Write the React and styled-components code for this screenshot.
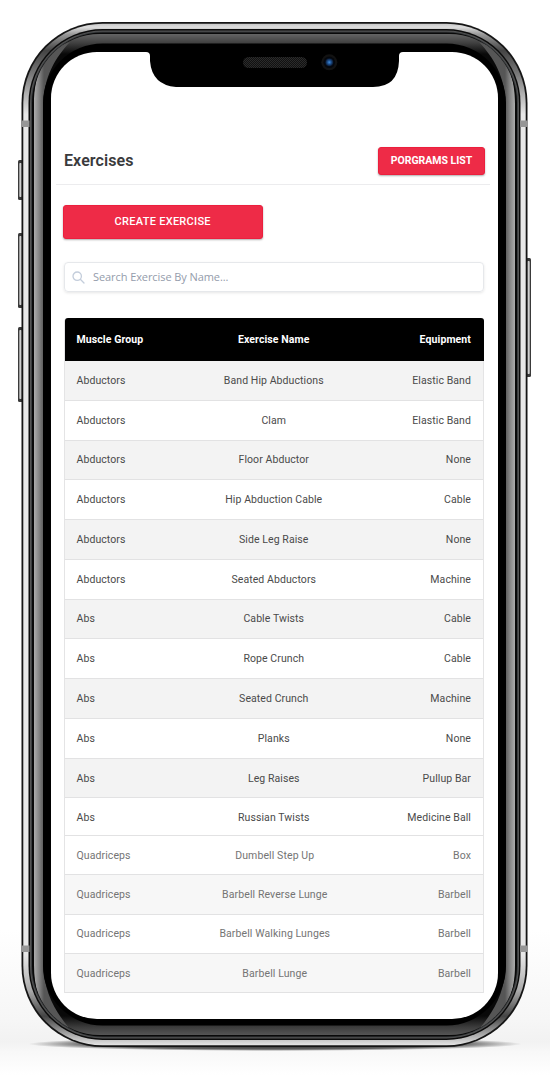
import React from "react";
import styled, { createGlobalStyle } from "styled-components";

const GlobalStyle = createGlobalStyle`
  *, *::before, *::after { box-sizing: border-box; }
  body { margin: 0; background: #fff; font-family: Roboto, "Liberation Sans", sans-serif; }
`;

const Stage = styled.main`
  position: relative;
  width: 550px;
  height: 1075px;
  padding: 52px 52px 56px 51px;
  overflow: hidden;
  background: linear-gradient(#fff 0 930px, #f6f6f6 1020px, #f2f2f2 1042px, #f8f8f8 1052px, #fff 1075px);
`;

const DeviceArt = styled.svg`
  position: absolute;
  inset: 0;
`;

const Screen = styled.div`
  position: relative;
  width: 447px;
  height: 967px;
  padding: 84px 8px 0 5px;
  border-radius: 46px;
  background: #fff;
`;

const TopBar = styled.header`
  display: flex;
  align-items: center;
  justify-content: space-between;
  height: 49px;
  padding: 1px 5px 0 8px;
  border-bottom: 1px solid #ececee;
`;

const Title = styled.h1`
  margin: 0;
  font-size: 16px;
  line-height: 20px;
  font-weight: 600;
  letter-spacing: 0.1px;
  color: #3a3a3c;
`;

const Button = styled.button`
  display: block;
  width: ${(p) => p.$w}px;
  height: ${(p) => p.$h}px;
  padding: 0;
  border: 1px solid #ec1f3d;
  border-radius: 3px;
  background: #ee2b47;
  box-shadow: 0 1px 2px rgba(0, 0, 0, 0.32);
  color: #fff;
  font: ${(p) => p.$weight} ${(p) => p.$size}px/14px Roboto, sans-serif;
  letter-spacing: ${(p) => p.$tracking}px;
`;

const Body = styled.section`
  padding: 20px 6px 0 6.5px;
`;

const SearchField = styled.label`
  display: flex;
  align-items: center;
  gap: 8px;
  height: 30px;
  margin: 23px 0 0 1px;
  padding-left: 7.5px;
  border: 1px solid #e6e8eb;
  border-radius: 4px;
  box-shadow: 0 1px 3px rgba(0, 0, 0, 0.1);
`;

const SearchInput = styled.input`
  flex: 1;
  min-width: 0;
  padding: 0;
  border: 0;
  outline: 0;
  background: transparent;
  font: 11px/16px "Open Sans", sans-serif;
  letter-spacing: -0.08px;
  &::placeholder { color: #949cab; opacity: 1; }
`;

const Table = styled.div`
  margin: 26px 0 0 1.5px;
  border: 1px solid #e4e4e5;
  border-top: 0;
  border-bottom: 0;
  border-radius: 4px 4px 0 0;
`;

const Row = styled.div`
  display: grid;
  grid-template-columns: 110px 1fr 110px;
  align-items: center;
  height: ${(p) => p.$h}px;
  padding: ${(p) => p.$drop || 0}px 12px 0 11.5px;
  border-bottom: 1px solid #e2e2e3;
  background: ${(p) => (p.$shaded ? (p.$faded ? "#f7f7f7" : "#f3f3f3") : "#fff")};
  color: ${(p) => (p.$faded ? "#747474" : "#4a4a4a")};
  font-size: 10.5px;
  letter-spacing: ${(p) => (p.$faded ? 0.1 : 0.08)}px;
`;

const HeadRow = styled(Row)`
  margin: 0 -0.5px;
  padding: 0 12.5px 1px 12px;
  border-bottom: 0;
  border-radius: 3px 3px 0 0;
  background: #000;
  color: #fff;
  font-weight: 700;
  letter-spacing: 0.1px;
`;

const Cell = styled.span`
  padding-left: ${(p) => (p.$nudge ? 2 : 0)}px;
  text-align: ${(p) => p.$align || "left"};
  white-space: nowrap;
`;

const rows = [
  ["Abductors", "Band Hip Abductions", "Elastic Band"],
  ["Abductors", "Clam", "Elastic Band"],
  ["Abductors", "Floor Abductor", "None"],
  ["Abductors", "Hip Abduction Cable", "Cable"],
  ["Abductors", "Side Leg Raise", "None"],
  ["Abductors", "Seated Abductors", "Machine"],
  ["Abs", "Cable Twists", "Cable"],
  ["Abs", "Rope Crunch", "Cable"],
  ["Abs", "Seated Crunch", "Machine"],
  ["Abs", "Planks", "None"],
  ["Abs", "Leg Raises", "Pullup Bar"],
  ["Abs", "Russian Twists", "Medicine Ball"],
];

const moreRows = [
  ["Quadriceps", "Dumbell Step Up", "Box"],
  ["Quadriceps", "Barbell Reverse Lunge", "Barbell"],
  ["Quadriceps", "Barbell Walking Lunges", "Barbell"],
  ["Quadriceps", "Barbell Lunge", "Barbell"],
];

function Ring({ inset, fill, r = 81 - inset }) {
  return (
    <rect x={21.5 + inset} y={22 + inset} width={506 - 2 * inset} height={1025 - 2 * inset} rx={r} fill={fill} />
  );
}

function SideKey({ x, y, h }) {
  return (
    <g>
      <rect x={x} y={y} width="5" height={h} rx="1.5" fill="#3a3a3a" />
      <rect x={x + 1} y={y + 3} width="3" height={h - 6} rx="1" fill="url(#key)" />
    </g>
  );
}

const Shine = () => (
  <path d="M34 104C34 74 44 49 70 42C56 57 43.2 76 43.2 108V961C43.2 993 56 1012 69 1028C44 1020 34 995 34 965Z" fill="url(#shine)" />
);

function Device() {
  return (
    <DeviceArt width="550" height="1075" viewBox="0 0 550 1075" aria-hidden="true">
      <defs>
        <linearGradient id="metal" gradientUnits="userSpaceOnUse" x1="0" y1="22" x2="0" y2="1047">
          <stop offset="0" stopColor="#bbb" />
          <stop offset="0.005" stopColor="#ddd" />
          <stop offset="0.012" stopColor="#999" />
          <stop offset="0.028" stopColor="#444" />
          <stop offset="0.05" stopColor="#777" />
          <stop offset="0.09" stopColor="#e8e8e8" />
          <stop offset="0.91" stopColor="#e8e8e8" />
          <stop offset="0.945" stopColor="#aaa" />
          <stop offset="0.97" stopColor="#444" />
          <stop offset="0.988" stopColor="#aaa" />
          <stop offset="1" stopColor="#eee" />
        </linearGradient>
        <linearGradient id="band" gradientUnits="userSpaceOnUse" x1="0" y1="34" x2="0" y2="1036">
          <stop offset="0" stopColor="#646464" />
          <stop offset="0.009" stopColor="#404040" />
          <stop offset="0.02" stopColor="#090909" />
          <stop offset="0.98" stopColor="#090909" />
          <stop offset="0.991" stopColor="#3c3c3c" />
          <stop offset="1" stopColor="#585858" />
        </linearGradient>
        <linearGradient id="shine" gradientUnits="userSpaceOnUse" x1="34" y1="0" x2="44" y2="0">
          <stop offset="0" stopColor="#acacac" />
          <stop offset="0.5" stopColor="#858585" />
          <stop offset="1" stopColor="#565656" />
        </linearGradient>
        <linearGradient id="key" x1="0" y1="0" x2="1" y2="0">
          <stop offset="0" stopColor="#888" />
          <stop offset="0.5" stopColor="#d0d0d0" />
          <stop offset="1" stopColor="#909090" />
        </linearGradient>
        <radialGradient id="floor">
          <stop offset="0" stopColor="#000" stopOpacity="0.9" />
          <stop offset="0.75" stopColor="#000" stopOpacity="0.6" />
          <stop offset="1" stopColor="#000" stopOpacity="0" />
        </radialGradient>
        <radialGradient id="lens">
          <stop offset="0" stopColor="#3f8ddd" />
          <stop offset="0.5" stopColor="#1c4b87" />
          <stop offset="1" stopColor="#08152a" />
        </radialGradient>
        <pattern id="mesh" width="2" height="2" patternUnits="userSpaceOnUse">
          <rect width="2" height="2" fill="#111" />
          <rect width="1" height="1" fill="#2b2b2b" />
          <rect x="1" y="1" width="1" height="1" fill="#2b2b2b" />
        </pattern>
        <clipPath id="bandClip">
          <Ring inset={12} r={66} />
        </clipPath>
      </defs>
      <ellipse cx="275" cy="1044" rx="247" ry="7" fill="url(#floor)" />
      <SideKey x={18} y={160} h={40} />
      <SideKey x={18} y={233} h={75} />
      <SideKey x={18} y={327} h={75} />
      <SideKey x={526} y={258} h={119} />
      <Ring inset={0} fill="#151515" />
      <Ring inset={1.8} fill="url(#metal)" />
      <Ring inset={7} fill="#0c0c0c" />
      <Ring inset={8.5} fill="#555" />
      <Ring inset={9.5} fill="#3a3d3f" />
      <Ring inset={10.5} fill="#090909" />
      <Ring inset={12} r={66} fill="url(#band)" />
      <g clipPath="url(#bandClip)">
        <Shine />
        <g transform="translate(549 0) scale(-1 1)"><Shine /></g>
      </g>
      <Ring inset={21.5} fill="#000" />
      <g fill="#969696">
        <rect x="21.5" y="120.5" width="8" height="6.5" />
        <rect x="520" y="120.5" width="8" height="6.5" />
        <rect x="21.5" y="945.5" width="8" height="6.5" />
        <rect x="520" y="945.5" width="8" height="6.5" />
      </g>
    </DeviceArt>
  );
}

function Notch() {
  return (
    <DeviceArt width="550" height="100" viewBox="0 0 550 100" aria-hidden="true">
      <path d="M144 51H405V52H403Q399 52 399 56V61Q398 87 373 87H176Q152 85 150 61V56Q150 52 146 52H144Z" fill="#000" />
      <rect x="243" y="57" width="64" height="11" rx="5.5" fill="url(#mesh)" />
      <circle cx="329.3" cy="62.3" r="8" fill="#121212" />
      <circle cx="329.3" cy="62.3" r="5.8" fill="#04070d" />
      <circle cx="329.3" cy="62.3" r="4" fill="url(#lens)" />
    </DeviceArt>
  );
}

function ExerciseRow({ data, ...rest }) {
  return (
    <Row {...rest}>
      <Cell>{data[0]}</Cell>
      <Cell $align="center" $nudge={rest.$faded}>{data[1]}</Cell>
      <Cell $align="right">{data[2]}</Cell>
    </Row>
  );
}

export default function App() {
  return (
    <Stage>
      <GlobalStyle />
      <Device />
      <Screen>
        <TopBar>
          <Title>Exercises</Title>
          <Button $w={107} $h={28} $size={10.5} $weight={700} $tracking={0}>PORGRAMS LIST</Button>
        </TopBar>
        <Body>
          <Button $w={200.5} $h={34} $size={11} $weight={500} $tracking={0.28}>CREATE EXERCISE</Button>
          <SearchField>
            <svg width="13" height="13" viewBox="0 0 13 13" fill="none" stroke="#c3cddb" strokeWidth="1.3" strokeLinecap="round">
              <circle cx="5.2" cy="5.2" r="4.2" />
              <path d="M8.3 8.3L12 12" />
            </svg>
            <SearchInput placeholder="Search Exercise By Name..." />
          </SearchField>
          <Table>
            <HeadRow $h={43}>
              <Cell>Muscle Group</Cell>
              <Cell $align="center">Exercise Name</Cell>
              <Cell $align="right">Equipment</Cell>
            </HeadRow>
            {rows.map((r, i) => (
              <ExerciseRow key={r[1]} data={r} $h={i === 11 ? 37.4 : 39.78} $drop={i === 11 ? 1.5 : 0} $shaded={i % 2 === 0} />
            ))}
            {moreRows.map((r, i) => (
              <ExerciseRow key={r[1]} data={r} $h={39.4} $faded $shaded={i % 2 === 1} />
            ))}
          </Table>
        </Body>
      </Screen>
      <Notch />
    </Stage>
  );
}
